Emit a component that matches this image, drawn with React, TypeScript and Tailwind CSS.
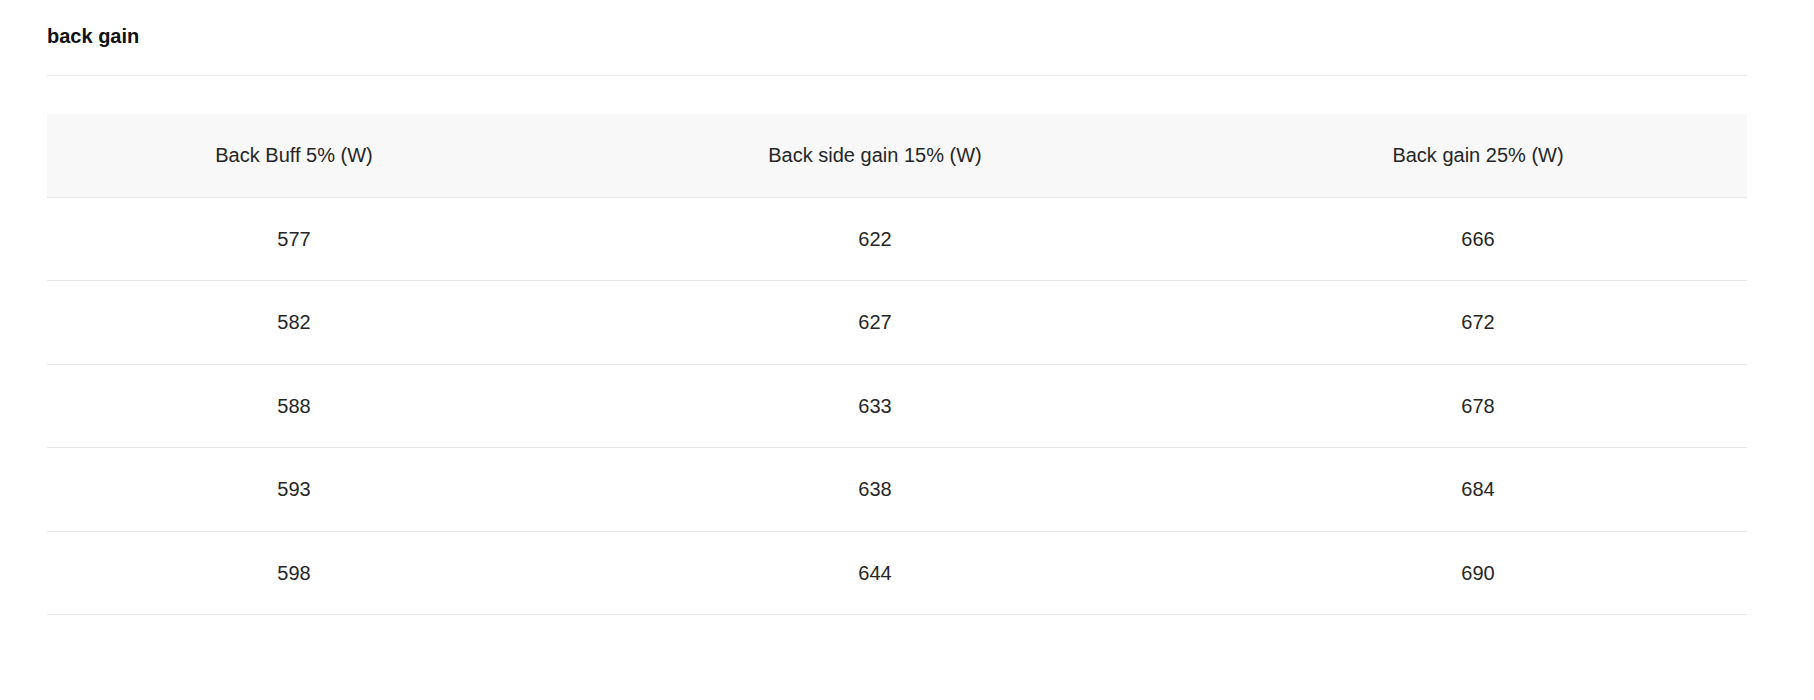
import React from "react";

const rows = [
  ["577", "622", "666"],
  ["582", "627", "672"],
  ["588", "633", "678"],
  ["593", "638", "684"],
  ["598", "644", "690"],
];

export default function App() {
  return (
    <div className="w-[1814px] h-[700px] bg-white" style={{ fontFamily: '"Liberation Sans", Arial, sans-serif' }}>
      <div className="ml-[47px] w-[1700px]">
        <div className="pt-[22px] pb-[25px] border-b border-[#ebebeb]">
          <h2 className="text-[20px] leading-[28px] font-bold text-[#111]">back gain</h2>
        </div>
        <table className="mt-[38px] w-full table-fixed border-collapse text-[20px] text-[#262626]">
          <colgroup>
            <col className="w-[494px]" />
            <col className="w-[668px]" />
            <col className="w-[538px]" />
          </colgroup>
          <thead>
            <tr className="h-[83px] bg-[#f8f8f8] border-b border-[#e8e8e8]">
              <th className="font-normal text-center p-0">Back Buff 5% (W)</th>
              <th className="font-normal text-center p-0">Back side gain 15% (W)</th>
              <th className="font-normal text-center p-0">Back gain 25% (W)</th>
            </tr>
          </thead>
          <tbody>
            {rows.map((r, i) => (
              <tr key={i} className="h-[83.5px] border-b border-[#e8e8e8]">
                {r.map((c, j) => (
                  <td key={j} className="text-center p-0">{c}</td>
                ))}
              </tr>
            ))}
          </tbody>
        </table>
      </div>
    </div>
  );
}
